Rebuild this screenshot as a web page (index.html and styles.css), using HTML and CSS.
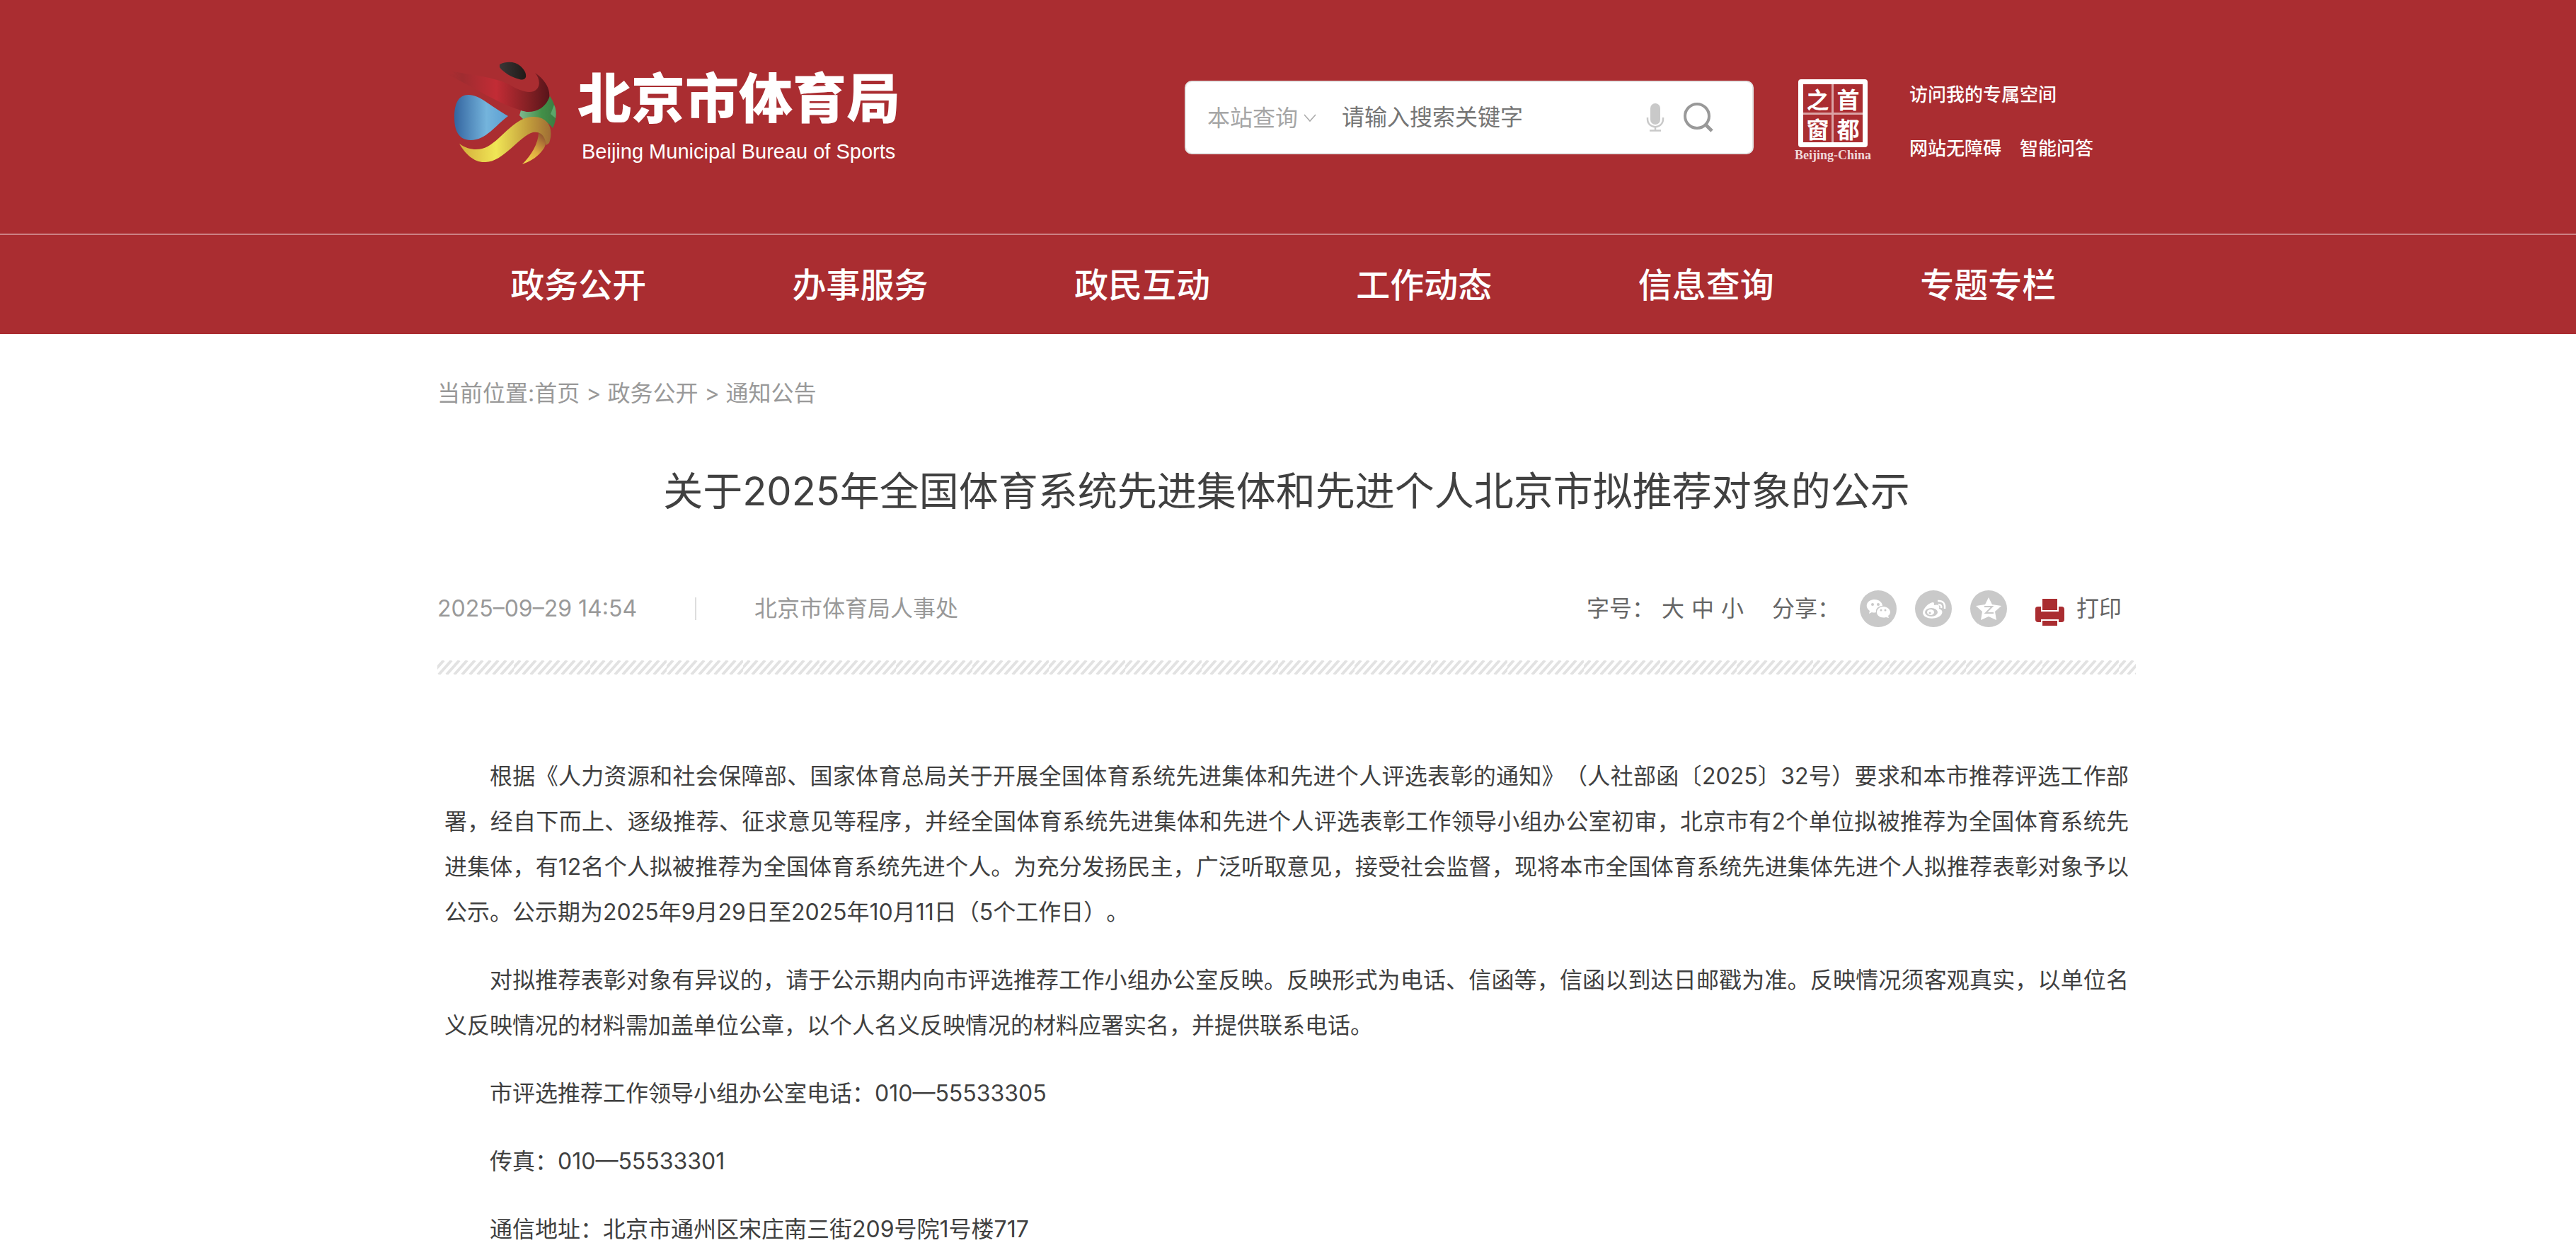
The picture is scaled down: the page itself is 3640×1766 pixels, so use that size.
FILE: index.html
```
<!DOCTYPE html>
<html lang="zh-CN">

<head>
  <meta charset="utf-8">
  <title>关于2025年全国体育系统先进集体和先进个人北京市拟推荐对象的公示</title>
  <link rel="stylesheet" href="styles.css">
</head>

<body>
  <header class="header">
    <div class="wrap header-top">
      <a class="logo" href="#">
        <svg class="logo-mark" viewBox="0 0 180 170" aria-hidden="true">
          <defs>
            <linearGradient id="g-red">
              <stop offset="0" stop-color="#aa2d31" stop-opacity="0" />
              <stop offset=".18" stop-color="#9f2c30" />
              <stop offset=".5" stop-color="#c22c35" />
              <stop offset=".8" stop-color="#842024" />
              <stop offset="1" stop-color="#58141a" />
            </linearGradient>
            <linearGradient id="g-blue">
              <stop offset="0" stop-color="#3465a0" />
              <stop offset=".6" stop-color="#74b4dc" />
              <stop offset="1" stop-color="#5c9fd2" />
            </linearGradient>
            <linearGradient id="g-yellow">
              <stop offset="0" stop-color="#d3ac3a" />
              <stop offset=".4" stop-color="#f0e656" />
              <stop offset=".75" stop-color="#c29e3c" />
              <stop offset="1" stop-color="#a06e34" />
            </linearGradient>
            <linearGradient id="g-tail" x1="0" y1="1" x2=".6" y2="0">
              <stop offset="0" stop-color="#f6dc50" />
              <stop offset=".5" stop-color="#e0ae40" />
              <stop offset="1" stop-color="#935530" />
            </linearGradient>
            <linearGradient id="g-green">
              <stop offset="0" stop-color="#80b890" />
              <stop offset=".6" stop-color="#439048" />
              <stop offset="1" stop-color="#3b7c42" />
            </linearGradient>
            <linearGradient id="g-black">
              <stop offset="0" stop-color="#3a3636" />
              <stop offset="1" stop-color="#201a18" />
            </linearGradient>
          </defs>
          <path fill="url(#g-green)" d="M116 86 C130 90 150 80 157 66 C167 80 168 98 161 111 C152 98 136 95 119 98 L114 93 Z" />
          <path fill="#5ca66a" d="M163 78 L158 91 L165 97 Q167 86 163 78 Z" />
          <path fill="url(#g-black)" d="M86 21 C96 16 108 17 115 23 C121 28 124 34 123 39 C121 43 118 43 114 42 C103 39 92 33 86 25 Z" />
          <path fill="url(#g-red)" d="M6 33 L24 35 L17 30 C50 37 75 38 99 49 C112 57 124 62 134 59 C144 55 144 42 136 33 C150 42 158 56 156 68 C151 81 139 89 124 88 C103 83 86 74 68 65 C48 54 28 42 6 33 Z" />
          <path fill="url(#g-blue)" d="M42 64 C58 64 70 78 98 94 C80 107 67 128 45 128 C28 128 22 114 22 96 C22 76 28 64 42 64 Z" />
          <path fill="url(#g-tail)" d="M141 114 C155 112 155 126 149 139 C142 150 131 158 118 162 C131 149 142 131 141 114 Z" />
          <path fill="url(#g-yellow)" d="M29 133 C43 143 58 143 69 137 C92 124 108 94 135 95 C155 96 163 112 156 132 L152 135 C150 121 143 115 133 117 C114 122 91 159 66 159 C50 160 38 148 29 133 Z" />
        </svg>
        <span class="logo-text">
          <strong class="logo-cn">北京市体育局</strong>
          <span class="logo-en">Beijing Municipal Bureau of Sports</span>
        </span>
      </a>

      <div class="header-tools">
        <form class="search" role="search">
          <button class="search-scope" type="button">本站查询
            <svg class="icon-arrow" viewBox="0 0 18 12" aria-hidden="true"><path d="M1 1 L9 10 L17 1" fill="none" stroke="#aaa" stroke-width="1.500" /></svg>
          </button>
          <input class="search-input" type="text" aria-label="搜索" placeholder="请输入搜索关键字">
          <button class="search-btn" type="button" aria-label="语音">
            <svg class="icon-mic" viewBox="0 0 26 40" aria-hidden="true">
              <rect x="6" y="0" width="14" height="30" rx="7" fill="#c9c9c9" />
              <path d="M2 20 V22 C2 37 24 37 24 22 V20 M13 33 V38 M5 38.500 H21" fill="none" stroke="#c9c9c9" stroke-width="2.500" />
            </svg>
          </button>
          <button class="search-btn" type="submit" aria-label="搜索">
            <svg class="icon-search" viewBox="0 0 44 44" aria-hidden="true">
              <circle cx="20" cy="20" r="17" fill="none" stroke="#999" stroke-width="4" />
              <path d="M32 32 L41 41" stroke="#999" stroke-width="5" />
            </svg>
          </button>
        </form>

        <a class="seal" href="#">
          <span class="seal-grid"><i>之</i><i>首</i><i>窗</i><i>都</i></span>
          <span class="seal-en">Beijing-China</span>
        </a>

        <div class="quick">
          <a href="#">访问我的专属空间</a>
          <div class="quick-row">
            <a href="#">网站无障碍</a>
            <a href="#">智能问答</a>
          </div>
        </div>
      </div>
    </div>

    <nav class="nav">
      <ul class="wrap nav-list">
        <li><a href="#">政务公开</a></li>
        <li><a href="#">办事服务</a></li>
        <li><a href="#">政民互动</a></li>
        <li><a href="#">工作动态</a></li>
        <li><a href="#">信息查询</a></li>
        <li><a href="#">专题专栏</a></li>
      </ul>
    </nav>
  </header>

  <main class="wrap">
    <div class="crumbs">当前位置:<a href="#">首页</a> &gt; <a href="#">政务公开</a> &gt; <a href="#">通知公告</a></div>

    <h1 class="title">关于2025年全国体育系统先进集体和先进个人北京市拟推荐对象的公示</h1>

    <div class="meta">
      <div class="meta-info">
        <time>2025–09–29 14:54</time>
        <span class="meta-line"></span>
        <span>北京市体育局人事处</span>
      </div>
      <div class="meta-tools">
        <div class="sizes">
          <span>字号：</span>
          <button type="button">大</button>
          <button type="button">中</button>
          <button type="button">小</button>
        </div>
        <div class="share">
          <span>分享：</span>
          <a href="#" aria-label="微信">
            <svg class="icon-share" viewBox="0 0 52 52" aria-hidden="true">
              <circle cx="26" cy="26" r="26" fill="#c9c9c9" />
              <path fill="#fff" d="M21 13 C27 13 32 17 32 22 C26 22 22 26 23 31 Q20 32 17 31 L13 33 L14 29 C6 23 10 13 21 13 Z" />
              <path fill="#fff" d="M33 23 C39 23 43 27 43 31 Q43 34 40 36 L41 39 L37 38 C30 40 24 36 24 31 C24 27 28 23 33 23 Z" />
              <g fill="#c9c9c9"><circle cx="18" cy="20" r="2" /><circle cx="26" cy="20" r="2" /><circle cx="30" cy="28" r="1.500" /><circle cx="36" cy="28" r="1.500" /></g>
            </svg>
          </a>
          <a href="#" aria-label="微博">
            <svg class="icon-share" viewBox="0 0 52 52" aria-hidden="true">
              <circle cx="26" cy="26" r="26" fill="#c9c9c9" />
              <path fill="#fff" d="M22 18 Q28 15 27 21 Q36 19 34 26 Q40 28 38 33 C34 42 12 42 11 32 C11 27 17 20 22 18 Z" />
              <ellipse cx="23" cy="31" rx="9" ry="6" fill="#c9c9c9" />
              <ellipse cx="22" cy="31" rx="5" ry="4" fill="#fff" />
              <circle cx="21" cy="32" r="1.500" fill="#c9c9c9" />
              <path d="M32 15 Q43 14 42 26 M33 20 Q38 20 37 25" fill="none" stroke="#fff" stroke-width="2.500" />
            </svg>
          </a>
          <a href="#" aria-label="QQ空间">
            <svg class="icon-share" viewBox="0 0 52 52" aria-hidden="true">
              <circle cx="26" cy="26" r="26" fill="#c9c9c9" />
              <path fill="#fff" d="M26 10 L31 20 L44 22 L35 30 L37 42 L26 37 L15 42 L17 30 L8 22 L21 20 Z" />
              <path d="M20 23 H31 L22 32 H33" fill="none" stroke="#c9c9c9" stroke-width="2" />
            </svg>
          </a>
        </div>
        <button class="print" type="button">
          <svg class="icon-print" viewBox="0 0 42 38" aria-hidden="true">
            <path fill="#aa2d31" d="M10 0 H31 V16 H10 Z M0 14 Q0 11 4 11 H8 V18 H33 V11 H37 Q41 11 41 15 V29 Q41 33 37 33 H33 V29 H8 V33 H4 Q0 33 0 29 Z M10 31 H31 V38 H10 Z" />
          </svg>
          打印
        </button>
      </div>
    </div>

    <svg class="stripes" height="20" aria-hidden="true">
      <defs>
        <pattern id="hatch" width="108" height="20" patternUnits="userSpaceOnUse">
          <path d="M-9 20 L9 0 M2 20 L20 0 M13 20 L31 0 M24 20 L42 0 M35 20 L53 0 M46 20 L64 0 M57 20 L75 0 M68 20 L86 0 M79 20 L97 0 M90 20 L108 0 M101 20 L119 0" stroke="#e2e2e2" stroke-width="4" />
        </pattern>
      </defs>
      <rect width="100%" height="20" fill="url(#hatch)" />
    </svg>

    <article class="article">
      <p>根据《人力资源和社会保障部、国家体育总局关于开展全国体育系统先进集体和先进个人评选表彰的通知》（人社部函〔2025〕32号）要求和本市推荐评选工作部署，经自下而上、逐级推荐、征求意见等程序，并经全国体育系统先进集体和先进个人评选表彰工作领导小组办公室初审，北京市有2个单位拟被推荐为全国体育系统先进集体，有12名个人拟被推荐为全国体育系统先进个人。为充分发扬民主，广泛听取意见，接受社会监督，现将本市全国体育系统先进集体先进个人拟推荐表彰对象予以公示。公示期为2025年9月29日至2025年10月11日（5个工作日）。</p>
      <p>对拟推荐表彰对象有异议的，请于公示期内向市评选推荐工作小组办公室反映。反映形式为电话、信函等，信函以到达日邮戳为准。反映情况须客观真实，以单位名义反映情况的材料需加盖单位公章，以个人名义反映情况的材料应署实名，并提供联系电话。</p>
      <p>市评选推荐工作领导小组办公室电话：010—55533305</p>
      <p>传真：010—55533301</p>
      <p>通信地址：北京市通州区宋庄南三街209号院1号楼717</p>
    </article>
  </main>
</body>

</html>
```
FILE: styles.css
```
* {
  box-sizing: border-box;
}

body {
  margin: 0;
  font-family: Inter, "Noto Sans CJK SC", sans-serif;
  font-size: 32px;
  line-height: 48px;
  color: #404040;
  background: #fff;
  text-spacing-trim: space-all;
}

a {
  color: inherit;
  text-decoration: none;
}

button, input {
  padding: 0;
  border: 0;
  background: none;
  font: inherit;
  color: inherit;
}

svg {
  display: block;
}

.wrap {
  max-width: 2404px;
  margin: 0 auto;
  padding-right: 4px;
}

/* header */
.header {
  background: #aa2d31;
  color: #fff;
}

.header-top {
  display: flex;
  justify-content: space-between;
  min-height: 330px;
  padding-top: 70px;
}

.logo {
  display: flex;
  align-items: flex-start;
}

.logo-mark {
  width: 180px;
  height: 170px;
  margin: 0 16px 0 2px;
}

.logo-text {
  padding-top: 20px;
}

.logo-cn, .logo-en {
  display: block;
}

.logo-cn {
  font-family: "Noto Sans CJK SC", sans-serif;
  font-size: 76px;
  line-height: 88px;
  font-weight: 900;
}

.logo-en {
  padding: 18px 0 0 6px;
  font-family: "Liberation Sans", sans-serif;
  font-size: 29px;
  line-height: 36px;
}

.header-tools {
  display: flex;
  align-items: flex-start;
  padding-right: 60px;
}

.search {
  display: flex;
  align-items: center;
  width: 804px;
  height: 104px;
  margin-top: 44px;
  padding: 0 54px 0 30px;
  border: 2px solid #e5e5e5;
  border-radius: 10px;
  background: #fff;
}

.search-scope {
  display: flex;
  align-items: center;
  gap: 8px;
  padding-top: 2px;
  color: #a6a6a6;
}

.icon-arrow {
  width: 18px;
  height: 12px;
}

.search-input {
  flex: 1;
  min-width: 0;
  padding-left: 36px;
}

.search-input::placeholder {
  color: #757575;
}

.search-btn {
  margin-left: 26px;
}

.icon-mic {
  width: 26px;
  height: 40px;
}

.icon-search {
  width: 44px;
  height: 44px;
}

.seal {
  margin: 42px 54px 0 58px;
  text-align: center;
}

.seal-grid {
  display: grid;
  grid-template-columns: 1fr 1fr;
  gap: 2px;
  width: 98px;
  height: 96px;
  margin: 0 auto;
  border: 7px solid #fff;
  border-radius: 4px;
  background: linear-gradient(#dba3a5, #dba3a5) 50% 0 / 3px 100% no-repeat, linear-gradient(#dba3a5, #dba3a5) 0 50% / 100% 3px no-repeat;
}

.seal-grid i {
  font: 700 32px/40px "Noto Sans CJK SC", sans-serif;
}

.seal-en {
  display: block;
  color: #f0d8d9;
  font: 700 18px/22px "Liberation Serif", serif;
}

.quick {
  padding-top: 44px;
  font-size: 26px;
  font-weight: 500;
  line-height: 40px;
}

.quick-row {
  display: flex;
  gap: 26px;
  margin-top: 36px;
}

.nav {
  border-top: 2px solid #cc8184;
}

.nav-list {
  display: flex;
  list-style: none;
  padding-top: 2px;
  padding-left: 0;
}

.nav-list li {
  width: 16.6%;
  text-align: center;
  font-size: 48px;
  font-weight: 500;
  line-height: 138px;
}

/* page */
.crumbs {
  padding-top: 60px;
  color: #999;
}

.title {
  margin: 74px 0 0;
  font-size: 56px;
  line-height: 80px;
  font-weight: 400;
  text-align: center;
}

.meta {
  display: flex;
  justify-content: space-between;
  align-items: center;
  margin-top: 100px;
  padding-right: 20px;
  height: 52px;
}

.meta-info, .meta-tools, .sizes, .share, .print {
  display: flex;
  align-items: center;
}

.meta-info {
  color: #999;
}

.meta-line {
  width: 2px;
  height: 32px;
  margin: 0 82px;
  background: #ddd;
}

.meta-tools {
  color: #666;
}

.sizes {
  gap: 10px;
  margin-right: 40px;
}

.share {
  gap: 26px;
}

.share span {
  margin-right: 2px;
}

.icon-share {
  width: 52px;
  height: 52px;
}

.print {
  align-items: flex-end;
  gap: 16px;
  margin-left: 40px;
}

.icon-print {
  width: 42px;
  height: 38px;
}

.stripes {
  width: 100%;
  margin-top: 47px;
}

.article {
  padding: 112px 10px 0;
  line-height: 64px;
}

.article p {
  margin: 0 0 32px;
  text-indent: 2em;
  text-align: justify;
}
```
